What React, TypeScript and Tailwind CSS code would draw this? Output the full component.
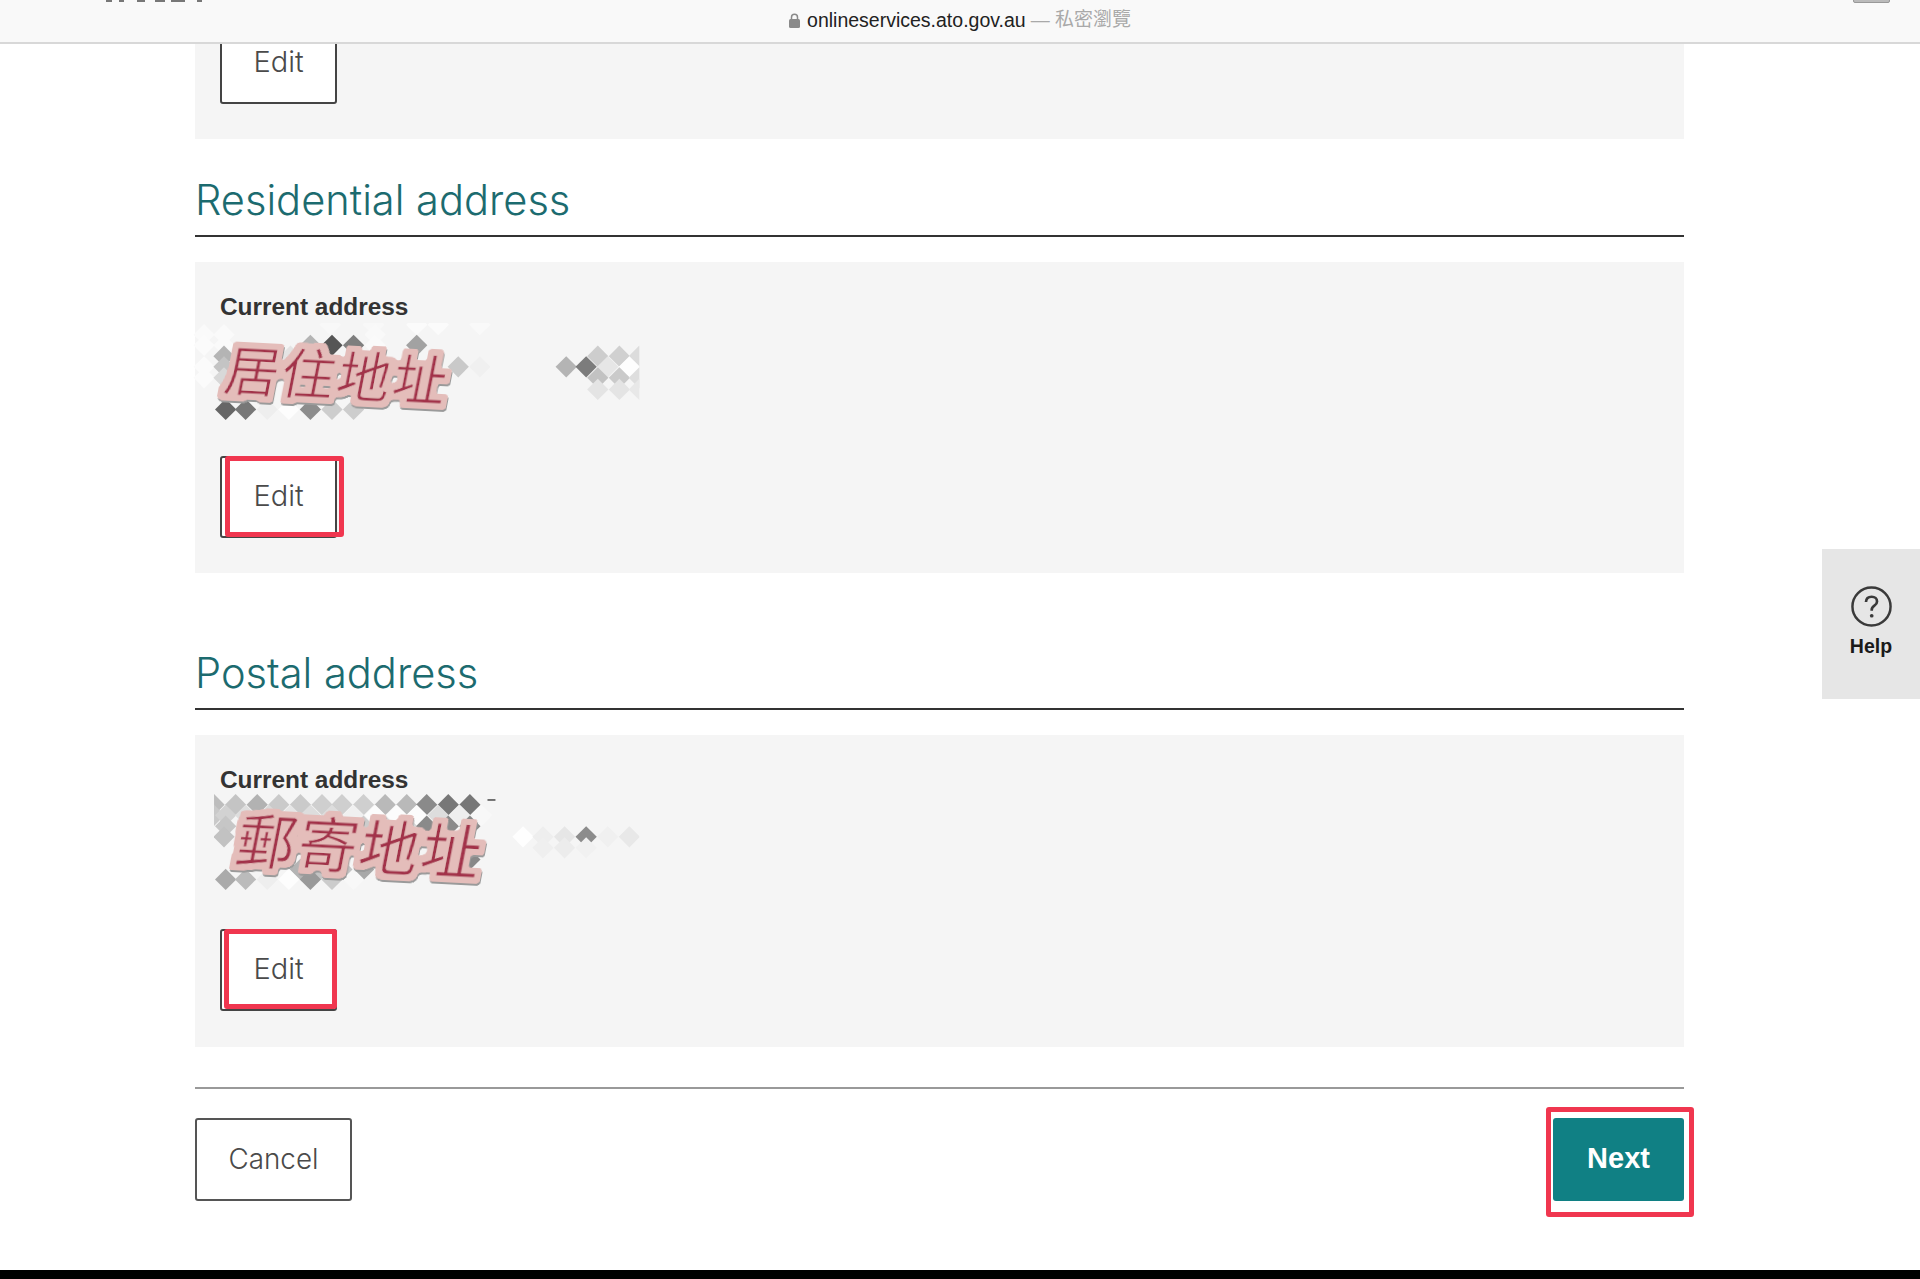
import type { ReactNode } from "react";

// [cx, cy, fill] in a 3x grid, so the mosaic reads the same as the zoomed crop
type Diamond = readonly [number, number, string];

const row = (cy: number, items: ReadonlyArray<readonly [number, string]>): Diamond[] =>
  items.map(([cx, fill]) => [cx, cy, fill] as const);

const residentialMosaic: Diamond[] = [
  ...row(135, [[745, "#fbfbfb"], [680, "#fbfbfb"], [870, "#f9f9f9"], [420, "#f8f8f8"], [550, "#f8f8f8"]]),
  ...row(165, [[40, "#fafafa"], [555, "#f9f9f9"], [100, "#fafafa"]]),
  ...row(197, [[40, "#fbfbfb"], [100, "#fafafa"], [360, "#b4b4b4"], [425, "#555555"], [490, "#7e7e7e"], [555, "#fafafa"], [680, "#a2a2a2"]]),
  ...row(230, [[100, "#b4b4b4"], [165, "#cfcfcf"], [235, "#c9c9c9"], [300, "#e4e4e4"], [1225, "#cdcdcd"], [1290, "#d0d0d0"], [1350, "#dcdcdc"]]),
  ...row(262, [[40, "#fbfbfb"], [100, "#c4c4c4"], [550, "#a8a8a8"], [805, "#c9c9c9"], [870, "#f0f0f0"], [1130, "#b4b4b4"], [1190, "#7c7c7c"], [1255, "#e6e6e6"], [1320, "#fefefe"]]),
  ...row(295, [[40, "#fbfbfb"], [100, "#d8d8d8"], [1225, "#c2c2c2"], [1290, "#cacaca"], [1350, "#dedede"]]),
  ...row(330, [[1225, "#e4e4e4"], [1290, "#e4e4e4"], [1350, "#e8e8e8"]]),
  ...row(390, [[105, "#666666"], [165, "#777777"], [230, "#eeeeee"], [295, "#fdfdfd"], [360, "#8c8c8c"], [425, "#cdcdcd"], [490, "#cdcdcd"]]),
];

const postalMosaic: Diamond[] = [
  ...row(165, [[70, "#bdbdbd"], [135, "#c4c4c4"], [200, "#b2b2b2"], [265, "#cacaca"], [330, "#cacaca"], [395, "#cfcfcf"], [455, "#cfcfcf"], [520, "#cfcfcf"], [585, "#b9b9b9"], [650, "#b9b9b9"], [710, "#8a8a8a"], [775, "#777777"], [840, "#777777"]]),
  ...row(197, [[70, "#c9c9c9"], [105, "#d2d2d2"], [165, "#dedede"], [235, "#d9d9d9"], [300, "#e6e6e6"], [360, "#dddddd"], [425, "#dddddd"], [490, "#f0f0f0"], [555, "#fcfcfc"], [620, "#fcfcfc"], [680, "#fcfcfc"], [745, "#dddddd"], [810, "#eeeeee"], [875, "#f8f8f8"]]),
  ...row(230, [[105, "#c6c6c6"], [170, "#cccccc"], [265, "#c6c6c6"], [330, "#bdbdbd"], [390, "#cccccc"], [455, "#bdbdbd"], [520, "#cccccc"], [585, "#d6d6d6"], [650, "#d6d6d6"], [710, "#8a8a8a"], [775, "#8a8a8a"], [840, "#8a8a8a"]]),
  ...row(262, [[100, "#c2c2c2"], [330, "#aaaaaa"], [1000, "#fefefe"], [1060, "#eeeeee"], [1125, "#e6e6e6"], [1190, "#8c8c8c"], [1255, "#f0f0f0"], [1320, "#e8e8e8"]]),
  ...row(295, [[1060, "#efefef"], [1125, "#ececec"], [1190, "#f1f1f1"]]),
  ...row(330, [[840, "#888888"], [775, "#999999"]]),
  ...row(360, [[330, "#b4b4b4"], [390, "#c4c4c4"], [455, "#c4c4c4"], [520, "#a8a8a8"]]),
  ...row(390, [[105, "#aaaaaa"], [165, "#bbbbbb"], [230, "#eeeeee"], [295, "#fdfdfd"], [360, "#999999"], [425, "#cccccc"], [490, "#f8f8f8"]]),
];

// pink marker halo round the handwriting, with a soft grey edge under it
function HaloFilter({ id }: { id: string }) {
  return (
    <filter id={id} x="-15%" y="-40%" width="130%" height="180%">
      <feMorphology in="SourceAlpha" operator="dilate" radius="15" result="fat" />
      <feGaussianBlur in="fat" stdDeviation="5" result="soft" />
      <feComponentTransfer in="soft" result="round">
        <feFuncA type="linear" slope="8" intercept="-3" />
      </feComponentTransfer>
      <feFlood floodColor="#e4bdba" />
      <feComposite in2="round" operator="in" result="halo" />
      <feFlood floodColor="#9a9a9a" />
      <feComposite in2="round" operator="in" />
      <feOffset dx="3" dy="5" result="edge" />
      <feMerge>
        <feMergeNode in="edge" />
        <feMergeNode in="halo" />
        <feMergeNode in="SourceGraphic" />
      </feMerge>
    </filter>
  );
}

function Mosaic({
  id,
  diamonds,
  clipLeft,
  note,
  noteTransform,
  noteSize,
  marks,
}: {
  id: string;
  diamonds: Diamond[];
  clipLeft: number;
  note: string;
  noteTransform: string;
  noteSize: number;
  marks?: ReactNode;
}) {
  return (
    <svg viewBox="0 130 1440 310" className="block h-[103px] w-[480px] overflow-visible">
      <clipPath id={id}>
        <rect x={clipLeft} y="130" width={1350 - clipLeft} height="310" />
      </clipPath>
      <HaloFilter id={`${id}-halo`} />
      <g clipPath={`url(#${id})`}>
        {diamonds.map(([cx, cy, fill]) => (
          <polygon
            key={`${cx}-${cy}`}
            points={`${cx},${cy - 32} ${cx + 32},${cy} ${cx},${cy + 32} ${cx - 32},${cy}`}
            fill={fill}
          />
        ))}
      </g>
      {marks}
      <text
        transform={noteTransform}
        fontSize={noteSize}
        letterSpacing="6"
        fill="#a2304a"
        stroke="#e4bdba"
        strokeWidth="3"
        filter={`url(#${id}-halo)`}
        className="font-['Noto_Sans_CJK_TC',sans-serif]"
      >
        {note}
      </text>
    </svg>
  );
}

function Heading({ children, className }: { children: string; className: string }) {
  return (
    <div className={`flex items-end border-b-2 border-[#333333] pb-[11px] ${className}`}>
      <h2 className="font-['Inter',sans-serif] text-[41.6px] leading-[48px] font-light text-[#1c6b6f]">{children}</h2>
    </div>
  );
}

function EditButton() {
  return (
    <button className="h-[82px] w-[117px] shrink-0 rounded-[3px] border-2 border-[#444444] bg-white pb-[2px] font-['Inter',sans-serif] text-[29px] font-light text-[#4a4a4a]">
      Edit
    </button>
  );
}

export default function App() {
  return (
    <div className="relative flex h-[1279px] w-full flex-col overflow-hidden bg-white font-['Liberation_Sans',Arial,sans-serif] text-[#333333]">
      {/* browser bar */}
      <header className="relative flex h-[44px] shrink-0 items-center justify-center border-b-2 border-[#d8d8d8] bg-[#f9f9f9] pb-[1px] text-[19.5px]">
        <svg viewBox="0 0 100 3" className="absolute top-0 left-[105px] h-[3px] w-[100px]">
          <path d="M1 0h6v2H1zM14 0h5v2h-5zM32 0h8v2h-8zM50 0h10v2H50zM66 0h14v2H66zM92 0h5v2h-5z" fill="#777777" />
        </svg>
        <div className="absolute -top-[2px] right-[30px] h-[5px] w-[37px] rounded-[2px] border border-[#999999] bg-[#bbbbbb]" />
        <svg viewBox="0 0 11 15" className="mr-[7px] h-[15px] w-[11px]">
          <path d="M2.5 6.5V4.2a3 3 0 0 1 6 0v2.3" fill="none" stroke="#8a8a8a" strokeWidth="1.5" />
          <rect x="0" y="6" width="11" height="9" rx="1.5" fill="#8a8a8a" />
        </svg>
        <span className="text-[#222222]">onlineservices.ato.gov.au</span>
        <span className="ml-[5px] font-['Liberation_Sans','Noto_Sans_CJK_TC',sans-serif] text-[19px] text-[#a9a9a9]">— 私密瀏覽</span>
      </header>

      <main className="ml-[195px] flex w-[1489px] flex-col">
        <section className="flex h-[95px] items-end overflow-hidden bg-[#f5f5f5] pb-[35px] pl-[25px]">
          <EditButton />
        </section>

        <Heading className="h-[98px]">Residential address</Heading>
        <section className="mt-[25px] flex h-[311px] flex-col items-start bg-[#f5f5f5] pt-[31px] pl-[25px]">
          <p className="text-[24.4px] leading-[28px] font-bold">Current address</p>
          <div className="mt-[2px] -ml-[30px]">
            <Mosaic
              id="residential"
              diamonds={residentialMosaic}
              clipLeft={0}
              note="居住地址"
              noteTransform="translate(95 330) rotate(3) skewX(-8)"
              noteSize={162}
            />
          </div>
          <div className="relative mt-[30px]">
            <EditButton />
            <div className="absolute top-0 -right-[7px] bottom-[1px] left-[5px] rounded-[3px] border-[5px] border-[#f0364f]" />
          </div>
        </section>

        <Heading className="h-[137px]">Postal address</Heading>
        <section className="mt-[25px] flex h-[312px] flex-col items-start bg-[#f5f5f5] pt-[31px] pl-[25px]">
          <p className="text-[24.4px] leading-[28px] font-bold">Current address</p>
          <div className="-mt-[1px] -ml-[30px]">
            <Mosaic
              id="postal"
              diamonds={postalMosaic}
              clipLeft={70}
              note="郵寄地址"
              noteTransform="translate(125 338) rotate(3) skewX(-8)"
              noteSize={180}
              marks={<rect x="893" y="149" width="24" height="4" fill="#333333" />}
            />
          </div>
          <div className="relative mt-[33px]">
            <EditButton />
            <div className="absolute top-0 right-0 bottom-[2px] left-[4px] rounded-[3px] border-[5px] border-[#f0364f]" />
          </div>
        </section>

        <div className="mt-[40px] h-[2px] bg-[#999999]" />

        <div className="mt-[29px] flex items-start justify-between">
          <button className="h-[83px] w-[157px] rounded-[3px] border-2 border-[#555555] bg-white font-['Inter',sans-serif] text-[27.8px] font-light text-[#4a4a4a]">
            Cancel
          </button>
          <div className="relative">
            <button className="h-[83px] w-[131px] rounded-[3px] bg-[#108084] pb-[2px] text-[29px] font-bold text-white">
              Next
            </button>
            <div className="absolute -top-[11px] -right-[10px] -bottom-[16px] -left-[7px] rounded-[3px] border-[5px] border-[#f0364f]" />
          </div>
        </div>
      </main>

      <footer className="mt-auto h-[9px] shrink-0 bg-black" />

      {/* help tab floats over the page edge */}
      <aside className="absolute top-[549px] right-0 flex h-[150px] w-[98px] flex-col items-center bg-[#e6e6e6] pt-[37px]">
        <svg viewBox="0 0 40 40" className="h-[41px] w-[41px]">
          <circle cx="20" cy="20" r="18.6" fill="none" stroke="#3a3a3a" strokeWidth="2.4" />
          <path d="M14.6 15.6c.2-3.2 2.5-5.1 5.6-5.1 3 0 5.2 1.8 5.2 4.5 0 2-1 3.1-2.6 4.2-1.8 1.2-2.6 2.1-2.6 4.2v.8" fill="none" stroke="#3a3a3a" strokeWidth="2.6" />
          <circle cx="20.2" cy="29" r="1.8" fill="#3a3a3a" />
        </svg>
        <span className="mt-[8px] text-[19.5px] leading-[22px] font-bold text-[#1a1a1a]">Help</span>
      </aside>
    </div>
  );
}
